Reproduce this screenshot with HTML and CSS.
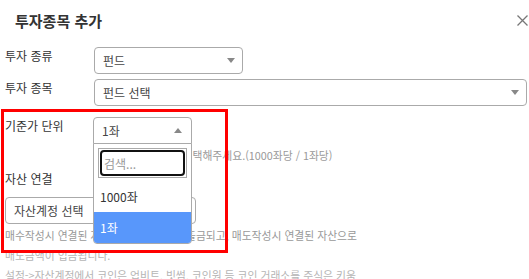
FILE: index.html
```html
<!DOCTYPE html>
<html lang="ko">
<head>
<meta charset="utf-8">
<link rel="stylesheet" href="styles.css">
</head>
<body>
<div class="modal">
  <div class="header">
    <h1 class="title">투자종목 추가</h1>
    <span class="close" aria-label="닫기">
      <svg width="11" height="11" viewBox="0 0 11 11"><path d="M0.5 0.5L10.5 10.5M10.5 0.5L0.5 10.5" stroke="#777" stroke-width="1.3" fill="none"/></svg>
    </span>
  </div>
  <div class="content">
    <div class="row">
      <div class="label">투자 종류</div>
      <div class="select w-type"><span>펀드</span><i class="arrow down"></i></div>
    </div>
    <div class="row row2">
      <div class="label">투자 종목</div>
      <div class="select grow"><span>펀드 선택</span><i class="arrow down"></i></div>
    </div>
    <div class="row row3">
      <div class="label">기준가 단위</div>
      <div class="select-wrap">
        <div class="select open w-unit"><span>1좌</span><i class="arrow up"></i></div>
        <div class="dropdown">
          <div class="search-wrap">
            <div class="search"><div class="search-inner">검색...</div></div>
          </div>
          <div class="option">1000좌</div>
          <div class="option active">1좌</div>
        </div>
      </div>
    </div>
    <div class="hint hint-unit">펀드 기준가 단위를 선택해주세요.(1000좌당 / 1좌당)</div>
    <div class="label label-block">자산 연결</div>
    <div class="select w-asset"><span class="asset-text">자산계정 선택</span><i class="arrow down"></i></div>
    <div class="hint hint-asset">
      <div>매수작성시 연결된 자산에서 매수금액이 출금되고, 매도작성시 연결된 자산으로</div>
      <div class="faint">매도금액이 입금됩니다.</div>
      <div class="faint">설정-&gt;자산계정에서 코인은 업비트, 빗썸, 코인원 등 코인 거래소를 주식은 키움</div>
    </div>
  </div>
  <div class="highlight-box"></div>
</div>
</body>
</html>
```
FILE: styles.css
```css
* { box-sizing: border-box; }
html, body { margin: 0; padding: 0; background: #fff; }
body {
  font-family: "Noto Sans CJK KR", "Noto Sans", sans-serif;
  color: #333;
  width: 529px;
  height: 279px;
  overflow: hidden;
}
.modal { position: relative; width: 529px; height: 279px; overflow: hidden; }
.header {
  height: 40px;
  display: flex;
  align-items: center;
  justify-content: space-between;
  padding: 0 1px 0 15px;
}
.title { margin: 0; font-size: 15px; font-weight: 700; color: #333; letter-spacing: 0; }
.close { display: flex; width: 11px; height: 11px; }
.content { padding: 7px 2px 0 5px; }
.row { display: flex; align-items: flex-start; }
.row2 { margin-top: 5px; }
.row3 { margin-top: 11px; }
.label { width: 89px; flex: none; font-size: 12px; line-height: 18px; color: #333; }
.select {
  height: 27px;
  border: 1px solid #aaa;
  border-radius: 4px;
  background: #fff;
  display: flex;
  align-items: center;
  justify-content: space-between;
  padding: 0 7px 0 8px;
  font-size: 12px;
  color: #444;
}
.w-type { width: 149px; }
.grow { flex: 1; }
.w-unit { width: 99px; }
.w-asset { width: 191px; margin-top: 9px; }
.select.open { border-radius: 4px 4px 0 0; }
.arrow { display: block; width: 0; height: 0; border-left: 4px solid transparent; border-right: 4px solid transparent; }
.arrow.down { border-top: 5px solid #888; }
.arrow.up { border-bottom: 5px solid #888; margin-right: 2px; }
.select-wrap { position: relative; margin-left: -1px; }
.dropdown {
  position: absolute;
  left: 0;
  top: 26px;
  width: 99px;
  border: 1px solid #aaa;
  border-radius: 0 0 4px 4px;
  background: #fff;
  z-index: 5;
  overflow: hidden;
}
.search-wrap { padding: 4px 4px 3px; }
.search { border: 1px solid #aaa; padding: 1px; height: 30px; }
.search-inner {
  height: 26px;
  border: 2px solid #111;
  border-radius: 4px;
  display: flex;
  align-items: center;
  padding-left: 2px;
  font-size: 12px;
  color: #999;
}
.option { height: 31px; line-height: 31px; padding-left: 6px; font-size: 12px; color: #333; }
.option.active { background: #5897fb; color: #fff; }
.hint { font-size: 10.8px; line-height: 20px; color: #999; white-space: nowrap; }
.hint-unit { margin-left: 89px; margin-top: 1px; }
.label-block { margin-top: 5px; }
.hint-asset { margin-top: 1px; }
.faint { color: #b5b5b5; }
.highlight-box {
  position: absolute;
  left: 1px;
  top: 109px;
  width: 227px;
  height: 144px;
  border: 3px solid #f00;
  z-index: 10;
  pointer-events: none;
}
```
